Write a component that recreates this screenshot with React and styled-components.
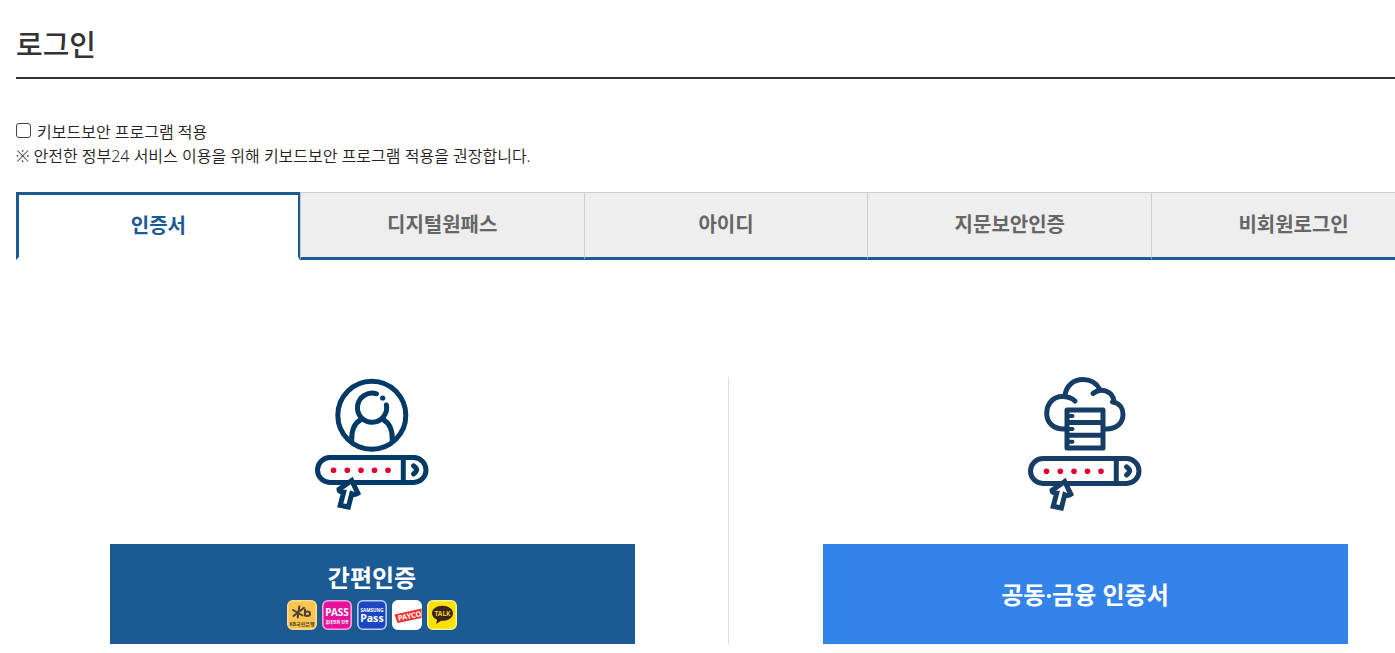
import React, { useState } from "react";
import styled, { createGlobalStyle, css } from "styled-components";

const NAVY = "#1c5a93";

const GlobalStyle = createGlobalStyle`
  *, *::before, *::after { box-sizing: border-box; }
  body {
    margin: 0;
    overflow-x: hidden;
    background: #fff;
    color: #333;
    font-family: "Noto Sans", "Noto Sans CJK KR", sans-serif;
    font-size: 16px;
    line-height: 24px;
  }
`;

const Page = styled.main`
  padding: 25px 0 8px 16px;
  overflow: hidden;
`;

const Title = styled.h1`
  margin: 0 0 41px;
  padding-bottom: 12px;
  border-bottom: 2px solid #333;
  font-size: 29px;
  line-height: 40px;
  font-weight: 500;
`;

const Security = styled.section`
  margin-bottom: 24px;
  color: #222;
  font-weight: 350;
`;

const CheckRow = styled.div`
  display: flex;
  align-items: center;
  gap: 6px;
`;

const Checkbox = styled.input`
  appearance: none;
  width: 15px;
  height: 15px;
  margin: 0 0 4px;
  border: 1px solid #444;
  border-radius: 3px;
  background: #fff;
  &:checked { background: ${NAVY}; }
`;

const Notice = styled.p`
  margin: 0;
`;

const Tabs = styled.div`
  display: grid;
  grid-template-columns: repeat(5, 1fr);
  margin-right: -40px;
`;

const Tab = styled.button`
  height: 68px;
  padding: 0;
  border: 0 solid #ccc;
  border-width: 1px 0 3px 1px;
  border-bottom-color: ${NAVY};
  background: #eee;
  color: #666;
  font: inherit;
  font-size: 20px;
  font-weight: 700;
  cursor: pointer;
  ${(p) =>
    p.$active &&
    css`
      border-width: 3px 2px 3px 3px;
      border-color: ${NAVY};
      border-bottom-color: #fff;
      background: #fff;
      color: ${NAVY};
    `}
`;

const Methods = styled.div`
  display: flex;
  margin: 117px -46px 0 0;
`;

const Method = styled.section`
  flex: 1;
  display: flex;
  flex-direction: column;
  align-items: center;
  gap: 32px;
  & + & { border-left: 1px solid #ddd; }
`;

const Illustration = styled.svg`
  display: block;
  width: 120px;
  height: 135px;
  fill: none;
  stroke: ${(p) => p.$ink};
  stroke-width: 5;
  stroke-linecap: round;
  stroke-linejoin: round;
`;

const MethodButton = styled.button`
  display: flex;
  flex-direction: column;
  align-items: center;
  justify-content: center;
  gap: 4px;
  width: 80%;
  max-width: 525px;
  height: 100px;
  padding: 2px 0 0;
  border: 0;
  background: ${(p) => p.$fill};
  color: #fff;
  font: inherit;
  font-size: 24px;
  line-height: 36px;
  font-weight: 700;
  cursor: pointer;
`;

const Providers = styled.span`
  display: flex;
  gap: 5px;
`;

const Badge = styled.svg`
  display: block;
  width: 30px;
  height: 30px;
  font-family: "Noto Sans", "Noto Sans CJK KR", sans-serif;
  font-weight: 700;
  text-anchor: middle;
`;

const PasswordBar = () => (
  <>
    <rect x="16.5" y="92.5" width="108.5" height="25" rx="12.5" />
    <path d="M102.3 93V117" />
    <path d="M112.5 100.8Q116.5 104 115.5 105.4Q115 107 112.5 109" />
    <g fill="#e4002b" stroke="none">
      {[32.5, 46.3, 60, 73.5, 87].map((x) => (
        <circle key={x} cx={x} cy="105.3" r="2.8" />
      ))}
    </g>
    <path
      fill="#fff"
      strokeWidth="5"
      strokeLinejoin="miter"
      d="M50.7 115.5L38 124.4Q38 127 42.7 127.2L39.2 140.3L47.4 142L50.7 128.8Q54 130.5 56.9 128.3Z"
    />
  </>
);

const PersonArt = () => (
  <Illustration $ink="#023a67" viewBox="11 12 120 135" aria-hidden="true">
    <circle cx="70.8" cy="50.3" r="34" />
    <path d="M75.5 28.8A14.6 14.6 0 1 0 85.4 40" />
    <circle cx="81.7" cy="33" r="2.6" fill="#023a67" stroke="none" />
    <path d="M60 54.5Q50 60 50.7 76M82 54.5Q92 60 91.3 76" />
    <PasswordBar />
  </Illustration>
);

const CloudArt = () => (
  <Illustration $ink="#163d66" viewBox="10 12 120 135" aria-hidden="true">
    <path d="M50 64C39 64.5 31.7 58 31.7 48.5C31.7 38.5 38.5 31.5 47 31.5C52 31.5 56.5 32.5 60 36" />
    <path d="M50 30C51.5 21 58 14.5 68 14.5C75 14.5 81.5 18 84.5 24" />
    <path d="M78 28.5C86 22 98 26 99 36.5L97.5 37C105 38 108 44 108 49.5C108 58 102 64 91 64" />
    <g strokeLinecap="butt">
      <rect x="52" y="45" width="36" height="38" fill="#fff" />
      <path d="M52 57.5H88M52 70.3H88" />
    </g>
    <path strokeWidth="4" d="M53 51H57.5M53 64H57.5M53 76.7H57.5" />
    <g transform="translate(-1 1)">
      <PasswordBar />
    </g>
  </Illustration>
);

const Tile = ({ fill, border }) => (
  <rect x="0.8" y="0.8" width="28.4" height="28.4" rx="5" fill={fill} stroke={border} strokeWidth="1.6" />
);

const KbBadge = () => (
  <Badge viewBox="0 0 30 30" role="img" aria-label="KB국민은행">
    <Tile fill="#fbc44e" border="#fbdc91" />
    <g fill="none" stroke="#4b4237" strokeWidth="2" strokeLinecap="round">
      <path d="M12.3 6.5L10.7 17.5M6 10L15.5 15.5M17 7.8L6.5 16" />
      <path d="M18 9.5V15.5" />
      <ellipse cx="20.4" cy="13.7" rx="2.6" ry="2.2" />
    </g>
    <text x="15" y="25.5" fontSize="5" fill="#4b4237">KB국민은행</text>
  </Badge>
);

const PassBadge = () => (
  <Badge viewBox="0 0 30 30" role="img" aria-label="PASS">
    <Tile fill="#e51399" border="#f6a5d8" />
    <text x="15" y="16" fontSize="10" fill="#fff">PASS</text>
    <text x="15" y="23.5" fontSize="4" fill="#fff">휴대전화 인증</text>
  </Badge>
);

const SamsungBadge = () => (
  <Badge viewBox="0 0 30 30" role="img" aria-label="Samsung Pass">
    <Tile fill="#1b48c1" border="#bccbf5" />
    <text x="15" y="12" fontSize="4.6" fill="#fff">SAMSUNG</text>
    <text x="15" y="21.5" fontSize="10.5" fill="#fff">Pass</text>
  </Badge>
);

const PaycoBadge = () => (
  <Badge viewBox="0 0 30 30" role="img" aria-label="PAYCO">
    <Tile fill="#fff" border="#fff" />
    <path d="M2.5 14.5L29.5 8.5V18L5.5 23Z" fill="#f2312c" />
    <text x="18" y="18.5" fontSize="7.4" fill="#fff" transform="rotate(-11 18 18)">PAYCO</text>
  </Badge>
);

const TalkBadge = () => (
  <Badge viewBox="0 0 30 30" role="img" aria-label="카카오톡">
    <Tile fill="#fae100" border="#fdf08c" />
    <path d="M15.3 5.8C9.5 5.8 5 9 5 13.3C5 16.3 7 18.5 10 19.8L9.2 24L14 20.8C21 21.3 26 18 26 13.3C26 9 21.5 5.8 15.3 5.8Z" fill="#3b2220" />
    <text x="15.5" y="16" fontSize="6.6" fill="#e9cf14">TALK</text>
  </Badge>
);

const TABS = ["인증서", "디지털원패스", "아이디", "지문보안인증", "비회원로그인"];

export default function App() {
  const [active, setActive] = useState(0);
  return (
    <>
      <GlobalStyle />
      <Page lang="ko">
        <Title>로그인</Title>
        <Security>
          <CheckRow>
            <Checkbox type="checkbox" id="keyboard-security" />
            <label htmlFor="keyboard-security">키보드보안 프로그램 적용</label>
          </CheckRow>
          <Notice>※ 안전한 정부24 서비스 이용을 위해 키보드보안 프로그램 적용을 권장합니다.</Notice>
        </Security>
        <Tabs role="tablist">
          {TABS.map((name, i) => (
            <Tab
              key={name}
              type="button"
              role="tab"
              aria-selected={i === active}
              $active={i === active}
              onClick={() => setActive(i)}
            >
              {name}
            </Tab>
          ))}
        </Tabs>
        <Methods>
          <Method>
            <PersonArt />
            <MethodButton type="button" $fill={NAVY}>
              간편인증
              <Providers>
                <KbBadge />
                <PassBadge />
                <SamsungBadge />
                <PaycoBadge />
                <TalkBadge />
              </Providers>
            </MethodButton>
          </Method>
          <Method>
            <CloudArt />
            <MethodButton type="button" $fill="#3383e9">
              공동·금융 인증서
            </MethodButton>
          </Method>
        </Methods>
      </Page>
    </>
  );
}
